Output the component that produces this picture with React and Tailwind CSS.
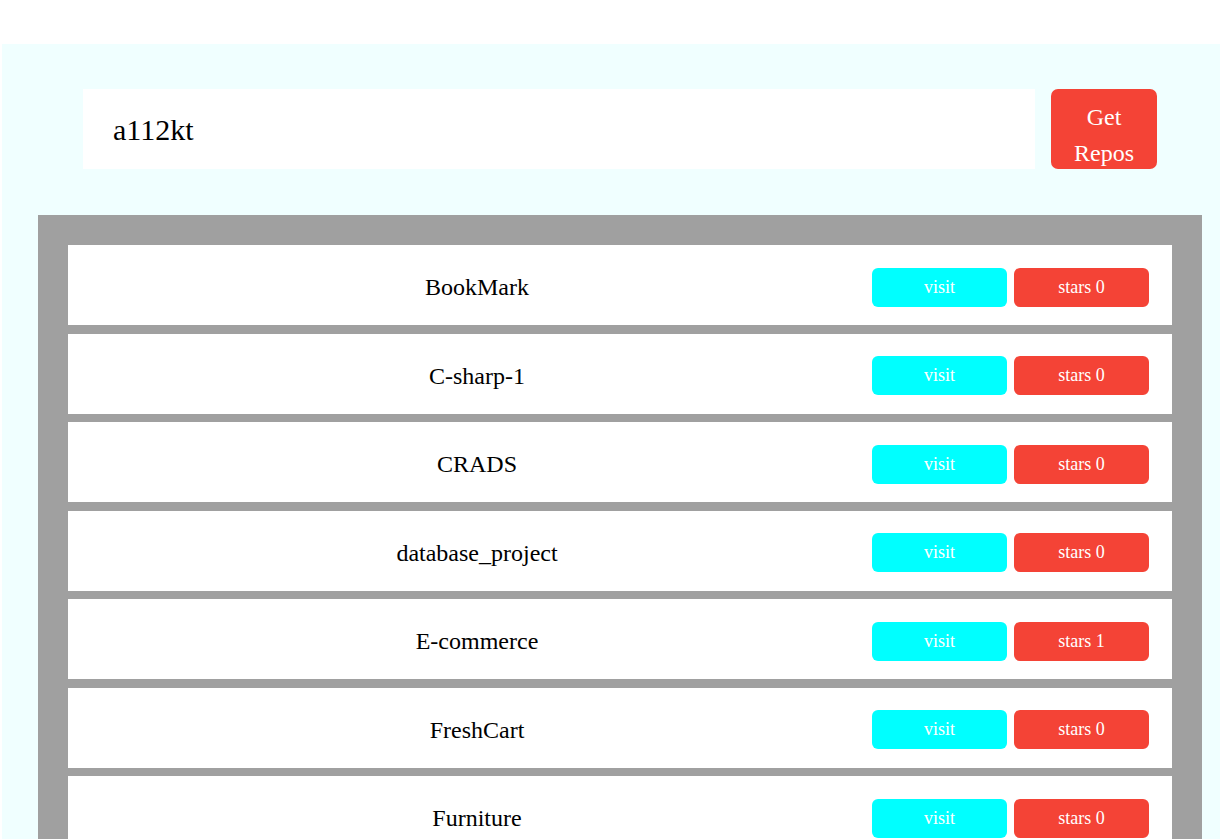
import React from 'react';

const repos = [
  { name: 'BookMark', stars: 0 },
  { name: 'C-sharp-1', stars: 0 },
  { name: 'CRADS', stars: 0 },
  { name: 'database_project', stars: 0 },
  { name: 'E-commerce', stars: 1 },
  { name: 'FreshCart', stars: 0 },
  { name: 'Furniture', stars: 0 },
  { name: 'Portfolio', stars: 0 },
];

const RepoRow = ({ repo }) => (
  <div className="flex items-center h-[80px] mb-[8.5px] bg-white pr-[23px] pt-[4px]">
    <div className="flex-1 text-center pl-[14px] text-[24px] text-black">{repo.name}</div>
    <button className="w-[135px] h-[39px] rounded-[6px] bg-[#00ffff] text-white text-[18px]">visit</button>
    <button className="ml-[7px] w-[135px] h-[39px] rounded-[6px] bg-[#f44336] text-white text-[18px]">
      stars {repo.stars}
    </button>
  </div>
);

export default function App() {
  return (
    <div className="h-[839px] overflow-hidden bg-white pt-[44px] pl-[2px] pr-[8px] font-['Liberation_Serif',serif]">
      <div className="bg-[#f0ffff] h-full">
        <div className="flex items-center pt-[45px] pl-[81px]">
          <input
            defaultValue="a112kt"
            className="w-[952px] h-[80px] bg-white pl-[30px] pt-[2px] text-[30px] text-black outline-none"
          />
          <button className="ml-[16px] w-[106px] h-[80px] pt-[10px] rounded-[7px] bg-[#f44336] text-white text-[24px] leading-[36px]">
            Get
            <br />
            Repos
          </button>
        </div>
        <div className="mt-[46px] ml-[36px] w-[1164px] bg-[#a0a0a0] px-[30px] pt-[30px]">
          {repos.map((repo) => (
            <RepoRow key={repo.name} repo={repo} />
          ))}
        </div>
      </div>
    </div>
  );
}
